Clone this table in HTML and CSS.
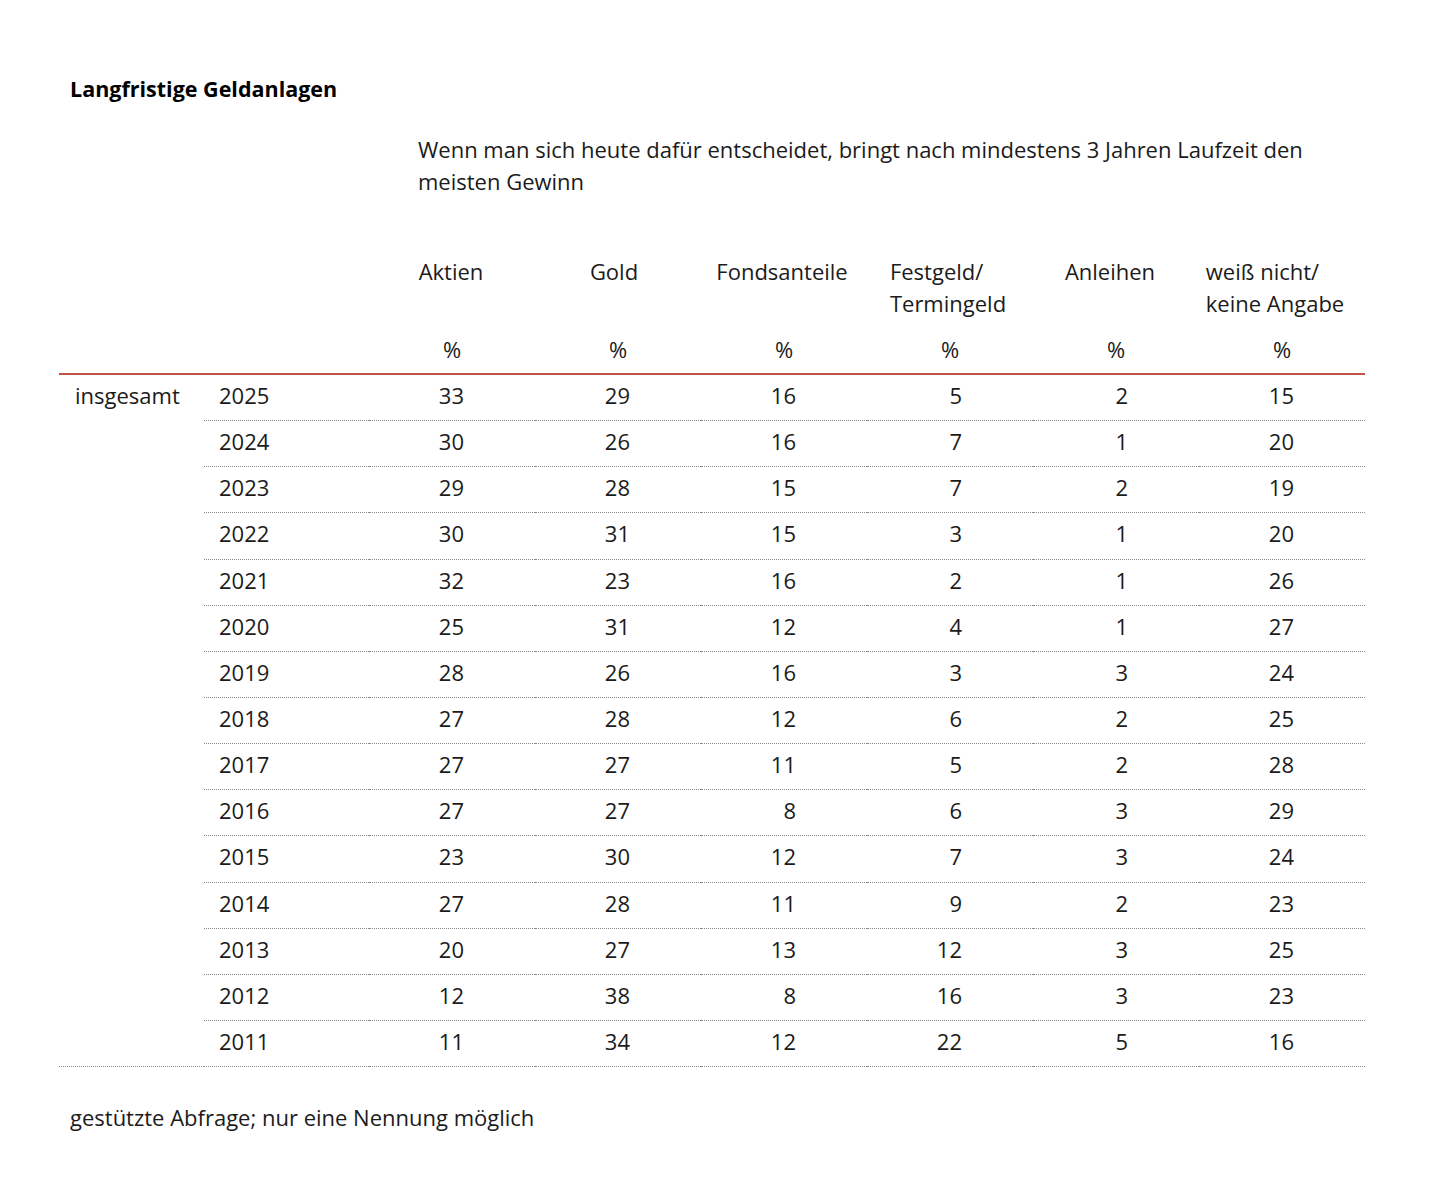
FILE: index.html
```html
<!DOCTYPE html>
<html lang="de">
<head>
<meta charset="utf-8">
<title>Langfristige Geldanlagen</title>
<link rel="stylesheet" href="styles.css">
</head>
<body>
<div class="page">
  <h1 class="title">Langfristige Geldanlagen</h1>
  <p class="subtitle">Wenn man sich heute dafür entscheidet, bringt nach mindestens 3 Jahren Laufzeit den<br>meisten Gewinn</p>
  <table class="data">
    <colgroup>
      <col class="c-label"><col class="c-year">
      <col class="c-val"><col class="c-val"><col class="c-val"><col class="c-val"><col class="c-val"><col class="c-val">
    </colgroup>
    <thead>
      <tr class="head">
        <th></th><th></th>
        <th class="h-aktien"><span class="hb">Aktien</span></th>
        <th class="h-gold"><span class="hb">Gold</span></th>
        <th class="h-fonds"><span class="hb">Fondsanteile</span></th>
        <th class="h-fest"><span class="hb">Festgeld/<br>Termingeld</span></th>
        <th class="h-anl"><span class="hb">Anleihen</span></th>
        <th class="h-wn"><span class="hb">weiß nicht/<br>keine Angabe</span></th>
      </tr>
      <tr class="unit">
        <th></th><th></th>
        <th>%</th><th>%</th><th>%</th><th>%</th><th>%</th><th>%</th>
      </tr>
    </thead>
    <tbody>
      <tr><td class="label" rowspan="15">insgesamt</td><td class="year">2025</td><td>33</td><td>29</td><td>16</td><td>5</td><td>2</td><td>15</td></tr>
      <tr><td class="year">2024</td><td>30</td><td>26</td><td>16</td><td>7</td><td>1</td><td>20</td></tr>
      <tr><td class="year">2023</td><td>29</td><td>28</td><td>15</td><td>7</td><td>2</td><td>19</td></tr>
      <tr><td class="year">2022</td><td>30</td><td>31</td><td>15</td><td>3</td><td>1</td><td>20</td></tr>
      <tr><td class="year">2021</td><td>32</td><td>23</td><td>16</td><td>2</td><td>1</td><td>26</td></tr>
      <tr><td class="year">2020</td><td>25</td><td>31</td><td>12</td><td>4</td><td>1</td><td>27</td></tr>
      <tr><td class="year">2019</td><td>28</td><td>26</td><td>16</td><td>3</td><td>3</td><td>24</td></tr>
      <tr><td class="year">2018</td><td>27</td><td>28</td><td>12</td><td>6</td><td>2</td><td>25</td></tr>
      <tr><td class="year">2017</td><td>27</td><td>27</td><td>11</td><td>5</td><td>2</td><td>28</td></tr>
      <tr><td class="year">2016</td><td>27</td><td>27</td><td>8</td><td>6</td><td>3</td><td>29</td></tr>
      <tr><td class="year">2015</td><td>23</td><td>30</td><td>12</td><td>7</td><td>3</td><td>24</td></tr>
      <tr><td class="year">2014</td><td>27</td><td>28</td><td>11</td><td>9</td><td>2</td><td>23</td></tr>
      <tr><td class="year">2013</td><td>20</td><td>27</td><td>13</td><td>12</td><td>3</td><td>25</td></tr>
      <tr><td class="year">2012</td><td>12</td><td>38</td><td>8</td><td>16</td><td>3</td><td>23</td></tr>
      <tr><td class="year">2011</td><td>11</td><td>34</td><td>12</td><td>22</td><td>5</td><td>16</td></tr>
    </tbody>
  </table>
  <p class="note">gestützte Abfrage; nur eine Nennung möglich</p>
</div>
</body>
</html>
```

FILE: styles.css
```css
html, body {
  margin: 0;
  padding: 0;
  background: #ffffff;
}

body {
  font-family: "Open Sans", "Noto Sans", "Liberation Sans", sans-serif;
  font-size: 22px;
  line-height: 32px;
  color: #1b1b1b;
}

.page {
  padding: 0 0 40px 59px;
  width: 1304px;
}

.title {
  margin: 74px 0 0 11px;
  font-size: 21.5px;
  line-height: 30px;
  font-weight: 700;
  color: #000000;
}

.subtitle {
  margin: 29px 0 0 359px;
  font-weight: 400;
}

.data {
  margin-top: 58px;
  width: 1304px;
  table-layout: fixed;
  border-collapse: collapse;
  border-spacing: 0;
}

.c-label { width: 145px; }
.c-year { width: 165px; }
.c-val { width: 166px; }

.data th {
  font-weight: 400;
  padding: 0;
  text-align: center;
  vertical-align: top;
}

.head th {
  padding-bottom: 14px;
}

.head .h-aktien { padding-right: 2px; }
.head .h-gold { padding-right: 8px; }
.head .h-fonds { padding-right: 4px; }
.head .h-fest { padding-right: 4px; }
.head .h-anl { padding-right: 12px; }
.head .h-wn { padding-right: 14px; }

.hb {
  display: inline-block;
  text-align: left;
}

.unit th {
  padding-bottom: 8px;
  border-bottom: 2px solid #c25445;
}

.data td {
  padding: 4px 71px 9.15px 0;
  text-align: right;
  vertical-align: top;
  border-bottom: 1px dotted #8a8a8a;
}

.data td.year {
  text-align: left;
  padding-left: 15px;
  padding-right: 0;
}

.data td.label {
  text-align: left;
  padding-left: 16px;
  padding-right: 0;
}

.note {
  margin: 34px 0 0 11px;
}
```
